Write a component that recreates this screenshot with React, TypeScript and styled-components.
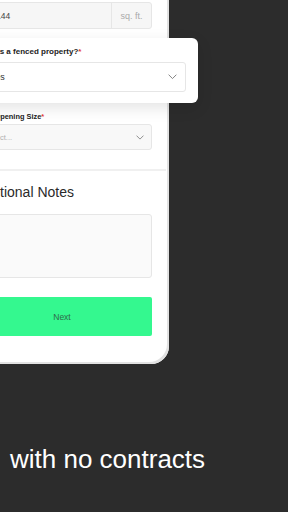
import styled, { createGlobalStyle } from "styled-components";

const GlobalStyle = createGlobalStyle`
  html, body {
    margin: 0;
    padding: 0;
    background: #2c2c2c;
  }
  body {
    font-family: "Liberation Sans", Arial, sans-serif;
  }
`;

const Stage = styled.div`
  width: 288px;
  height: 512px;
  overflow: hidden;
  background: #2c2c2c;
  display: flex;
  flex-direction: column;
`;

const Phone = styled.div`
  margin-left: -45px;
  width: 214px;
  height: 364px;
  flex-shrink: 0;
  box-sizing: border-box;
  padding-right: 3px;
  background: #fff;
  border-radius: 0 0 18px 0;
  box-shadow: inset -2px -2px 0 #e2e2e2;
  display: flex;
`;

const Screen = styled.div`
  flex: 1;
  padding: 2px 14px 0 17px;
  display: flex;
  flex-direction: column;
`;

const Field = styled.div`
  height: 27px;
  box-sizing: border-box;
  display: flex;
  border: 1px solid #e6e6e6;
  border-radius: 3px;
  background: #f6f6f6;
  font-size: 8.5px;
`;

const FieldValue = styled.div`
  flex: 1;
  display: flex;
  align-items: center;
  padding-left: 16px;
  color: #444;
`;

const Addon = styled.div`
  width: 39px;
  border-left: 1px solid #e6e6e6;
  display: flex;
  align-items: center;
  justify-content: center;
  color: #aaa;
  font-size: 9px;
`;

const Popup = styled.div`
  margin: 9px -46px 0 -3px;
  padding: 9px 12px 11px 12px;
  background: #fff;
  border-radius: 6px;
  box-shadow: 0 5px 16px rgba(0, 0, 0, 0.11);
  position: relative;
  z-index: 1;
`;

const Label = styled.div<{ $big?: boolean }>`
  font-size: ${(p) => (p.$big ? "8px" : "7.4px")};
  line-height: ${(p) => (p.$big ? "10px" : "9px")};
  font-weight: bold;
  color: #222;
  margin-bottom: ${(p) => (p.$big ? "5px" : "3px")};
  padding-left: ${(p) => (p.$big ? "0" : "4px")};
  white-space: nowrap;
`;

const Req = styled.span`
  color: #e53935;
`;

const Select = styled.div<{ $big?: boolean }>`
  height: ${(p) => (p.$big ? "30px" : "26px")};
  box-sizing: border-box;
  border: 1px solid #e6e6e6;
  border-radius: 3px;
  background: ${(p) => (p.$big ? "#fff" : "#f8f8f8")};
  display: flex;
  align-items: center;
  justify-content: space-between;
  padding: ${(p) => (p.$big ? "0 8px 0 8px" : "0 7px 0 12px")};
  font-size: ${(p) => (p.$big ? "9px" : "7.5px")};
`;

const SelectText = styled.span<{ $placeholder?: boolean }>`
  color: ${(p) => (p.$placeholder ? "#b0b0b0" : "#333")};
  white-space: nowrap;
`;

const Group = styled.div`
  margin-top: 9px;
`;

const Divider = styled.div`
  margin: 19px -14px 0 -17px;
  height: 2px;
  background: #f0f0f0;
`;

const Heading = styled.div`
  margin-top: 13px;
  font-size: 14px;
  line-height: 16px;
  color: #2a2a2a;
  white-space: nowrap;
`;

const TextArea = styled.div`
  margin-top: 14px;
  height: 64px;
  box-sizing: border-box;
  border: 1px solid #e6e6e6;
  border-radius: 3px;
  background: #fafafa;
`;

const NextButton = styled.div`
  margin-top: 19px;
  height: 39px;
  border-radius: 2px;
  background: #34f88f;
  display: flex;
  align-items: center;
  justify-content: center;
  font-size: 8.5px;
  color: #2f6a4a;
`;

const Caption = styled.div`
  margin-top: 80px;
  padding-left: 10px;
  font-size: 26px;
  line-height: 30px;
  color: #fff;
  white-space: nowrap;
`;

const Chevron = ({ size }: { size: number }) => (
  <svg width={size} height={size / 2 + 1} viewBox="0 0 10 6" fill="none">
    <path d="M1 1l4 4 4-4" stroke="#777" strokeWidth="1" strokeLinecap="round" strokeLinejoin="round" />
  </svg>
);

export default function App() {
  return (
    <Stage>
      <GlobalStyle />
      <Phone>
        <Screen>
          <Field>
            <FieldValue>2,144</FieldValue>
            <Addon>sq. ft.</Addon>
          </Field>
          <Popup>
            <Label $big>
              Is this a fenced property?<Req>*</Req>
            </Label>
            <Select $big>
              <SelectText>Yes</SelectText>
              <Chevron size={9} />
            </Select>
          </Popup>
          <Group>
            <Label>
              Gate Opening Size<Req>*</Req>
            </Label>
            <Select>
              <SelectText $placeholder>Select...</SelectText>
              <Chevron size={8} />
            </Select>
          </Group>
          <Divider />
          <Heading>Additional Notes</Heading>
          <TextArea />
          <NextButton>Next</NextButton>
        </Screen>
      </Phone>
      <Caption>with no contracts</Caption>
    </Stage>
  );
}
